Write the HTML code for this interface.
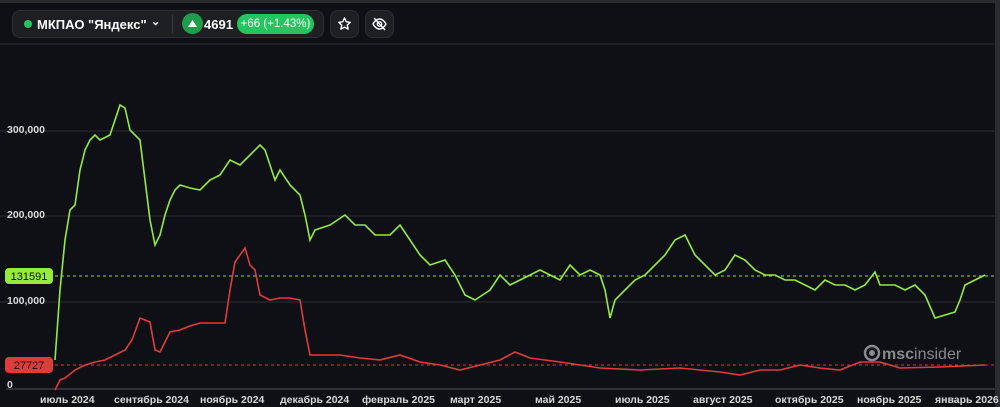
<!DOCTYPE html><html><head><meta charset="utf-8"><style>
body{margin:0;width:1000px;height:407px;background:#2a2b2f;overflow:hidden;font-family:"Liberation Sans",sans-serif}
#f{position:absolute;left:0;top:3px;width:995px;height:404px;background:#0f1015}
.bar{position:absolute;top:10px;height:28px;background:#1e1f23;border:1px solid #2e2f34;border-radius:8px;box-sizing:border-box;color:#fff;font-weight:bold;font-size:14px}
.t{position:absolute;color:#d8d8d8;font-size:10.5px;font-weight:bold}
</style></head><body><div id="f"></div>
<div class="bar" style="left:12px;width:312px">
<div style="position:absolute;left:11px;top:9px;width:8px;height:8px;border-radius:50%;background:#22c55e"></div>
<div style="position:absolute;left:24px;top:6px;font-size:13px">МКПАО "Яндекс"</div>
<div style="position:absolute;left:138px;top:4px;font-size:11px">⌄</div>
<div style="position:absolute;left:159px;top:4px;width:1px;height:18px;background:#3a3b40"></div>
<div style="position:absolute;left:169px;top:2px;width:21px;height:21px;border-radius:50%;background:#1f9d4a"><svg width="21" height="21"><path d="M6 14L10.5 7L15 14Z" fill="#fff"/></svg></div>
<div style="position:absolute;left:191px;top:6px;font-size:13px">4691</div>
<div style="position:absolute;left:224px;top:3px;width:77px;height:20px;border-radius:10px;background:#22c55e;font-size:11.5px;font-weight:normal;line-height:20px;text-align:center">+66 (+1.43%)</div>
</div>
<div class="bar" style="left:330px;width:29px"><svg width="27" height="26"><path d="M13.5 7l1.8 3.8 4 .5-3 2.8.8 4-3.6-2-3.6 2 .8-4-3-2.8 4-.5z" fill="none" stroke="#fff" stroke-width="1.4" stroke-linejoin="round"/></svg></div>
<div class="bar" style="left:365px;width:29px"><svg width="27" height="26"><path d="M7 13c2-3.5 4-5 6.5-5s4.5 1.5 6.5 5c-2 3.5-4 5-6.5 5s-4.5-1.5-6.5-5z" fill="none" stroke="#fff" stroke-width="1.4"/><circle cx="13.5" cy="13" r="2.2" fill="none" stroke="#fff" stroke-width="1.4"/><path d="M8 7l11 12" stroke="#fff" stroke-width="1.4"/></svg></div>
<svg width="1000" height="407" style="position:absolute;left:0;top:0">
<g stroke="#2c2d32" stroke-width="1"><line x1="0" y1="44" x2="995" y2="44"/><line x1="0" y1="131" x2="995" y2="131"/><line x1="0" y1="216" x2="995" y2="216"/><line x1="0" y1="302" x2="995" y2="302"/></g>
<line x1="6" y1="389" x2="995" y2="389" stroke="#555" stroke-width="1"/>
<line x1="55" y1="276" x2="995" y2="276" stroke="#8fe03a" stroke-dasharray="3,3" stroke-width="1"/>
<line x1="55" y1="365" x2="995" y2="365" stroke="#d63a3a" stroke-dasharray="3,3" stroke-width="1"/>
<polyline fill="none" stroke="#94ea3d" stroke-width="1.6" points="55,360 60,290 65,240 70,210 75,205 80,170 85,150 90,140 95,135 100,140 110,135 115,120 120,105 125,108 130,130 135,135 140,140 145,180 150,220 155,245 160,235 165,215 170,200 175,190 180,185 190,188 200,190 210,180 220,175 230,160 240,165 250,155 260,145 265,150 270,165 275,180 280,170 290,185 300,195 305,215 310,240 315,230 330,225 345,215 355,225 365,225 375,235 390,235 400,225 410,240 420,255 430,265 445,260 455,275 465,295 475,300 490,290 500,275 510,285 520,280 530,275 540,270 550,275 560,280 570,265 580,275 590,270 600,275 605,290 610,318 615,300 625,290 635,280 645,275 655,265 665,255 675,240 685,235 695,255 705,265 715,275 725,270 735,255 745,260 755,270 765,275 775,275 785,280 795,280 805,285 815,290 825,280 835,285 845,285 855,290 865,285 875,272 880,285 895,285 905,290 915,285 925,295 935,318 945,315 955,312 960,300 965,285 975,280 985,275"/>
<polyline fill="none" stroke="#e03b3b" stroke-width="1.6" points="55,390 60,380 65,378 75,370 85,365 95,362 105,360 115,355 125,350 132,340 140,318 145,320 150,322 155,350 160,352 170,332 180,330 190,326 200,323 210,323 225,323 230,290 235,262 240,255 245,248 250,265 255,270 260,295 270,300 280,298 290,298 300,300 305,330 310,355 320,355 340,355 360,358 380,360 400,355 420,362 440,365 460,370 480,365 500,360 515,352 530,358 560,362 600,368 640,370 680,368 720,372 740,375 760,370 780,370 800,365 820,368 840,370 860,362 880,362 900,368 940,367 985,365"/>
<rect x="5" y="268" width="48" height="16" rx="4" fill="#94ea3d"/><text x="29" y="280" font-size="11" text-anchor="middle" fill="#111" font-family="Liberation Sans">131591</text>
<rect x="5" y="357" width="48" height="16" rx="4" fill="#e03b3b"/><text x="29" y="369" font-size="11" text-anchor="middle" fill="#111" font-family="Liberation Sans">27727</text>
<circle cx="872" cy="353" r="7" fill="none" stroke="#8a8a8a" stroke-width="2.5"/><circle cx="872" cy="353" r="3" fill="#8a8a8a"/>
<text x="882" y="359" font-size="16" fill="#8a8a8a" font-family="Liberation Sans" font-weight="bold">msc<tspan font-weight="normal">insider</tspan></text>
</svg>
<div class="t" style="left:7px;top:124px">300,000</div>
<div class="t" style="left:7px;top:209px">200,000</div>
<div class="t" style="left:7px;top:295px">100,000</div>
<div class="t" style="left:7px;top:379px">0</div>
<div class="t" style="left:40px;top:394px">июль 2024</div>
<div class="t" style="left:114px;top:394px">сентябрь 2024</div>
<div class="t" style="left:200px;top:394px">ноябрь 2024</div>
<div class="t" style="left:280px;top:394px">декабрь 2024</div>
<div class="t" style="left:362px;top:394px">февраль 2025</div>
<div class="t" style="left:450px;top:394px">март 2025</div>
<div class="t" style="left:535px;top:394px">май 2025</div>
<div class="t" style="left:615px;top:394px">июль 2025</div>
<div class="t" style="left:693px;top:394px">август 2025</div>
<div class="t" style="left:775px;top:394px">октябрь 2025</div>
<div class="t" style="left:857px;top:394px">ноябрь 2025</div>
<div class="t" style="left:935px;top:394px">январь 2026</div>
</body></html>
